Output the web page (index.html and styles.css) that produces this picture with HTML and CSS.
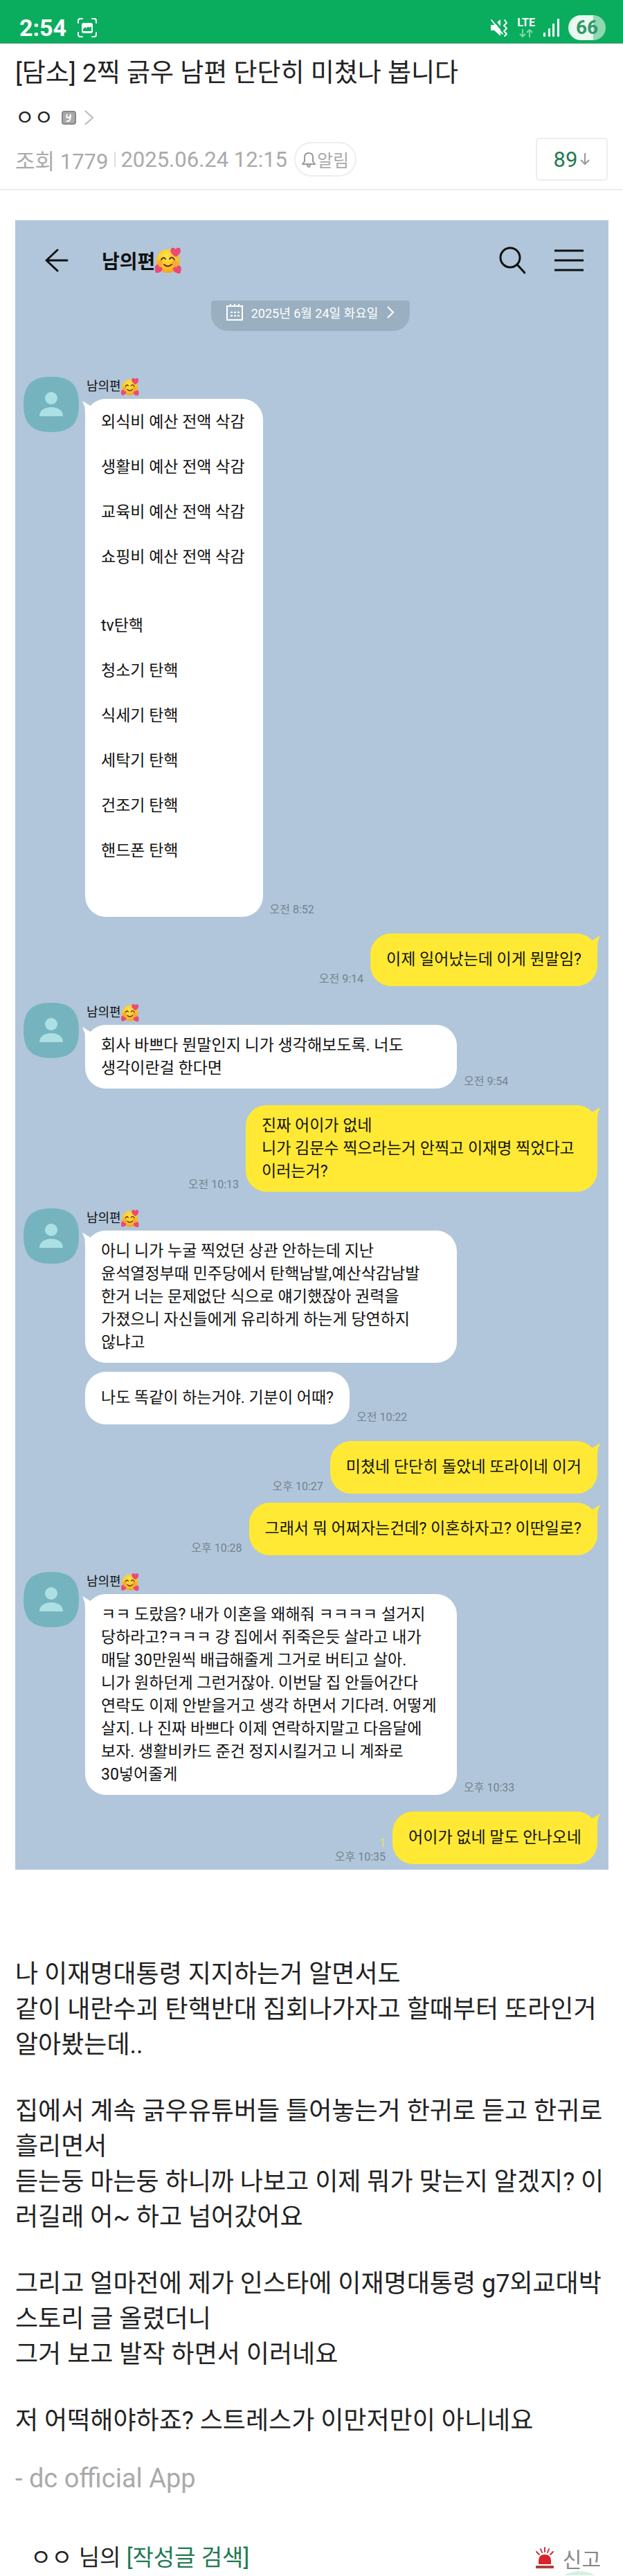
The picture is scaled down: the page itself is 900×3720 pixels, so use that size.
FILE: index.html
```html
<!DOCTYPE html>
<html lang="ko">
<head>
    <meta charset="UTF-8">
    <meta name="viewport" content="width=device-width, initial-scale=1.0">
    <title>[담소] 2찍 긁우 남편 단단히 미쳤나 봅니다</title>
    <link rel="stylesheet" href="styles.css">
</head>
<body>

<!-- shared icons -->
<svg class="defs" width="0" height="0" aria-hidden="true">
    <defs>
        <radialGradient id="face" cx="0.45" cy="0.3" r="0.75">
            <stop offset="0" stop-color="#ffe34a"/>
            <stop offset="0.65" stop-color="#fcc028"/>
            <stop offset="1" stop-color="#f09a22"/>
        </radialGradient>
    </defs>
    <symbol id="love" viewBox="0 0 38 40">
        <circle cx="18.5" cy="21" r="17" fill="url(#face)"/>
        <circle cx="7" cy="24" r="4" fill="#f79a3e" opacity="0.7"/>
        <circle cx="28" cy="24" r="4" fill="#f79a3e" opacity="0.7"/>
        <path d="M9 19q3-5 6-1M21 18q3-5 7 1" fill="none" stroke="#5a3512" stroke-width="2" stroke-linecap="round"/>
        <path d="M13 26q5 5 11 0" fill="none" stroke="#5a3512" stroke-width="2" stroke-linecap="round"/>
        <path d="M30 15C24 12 21 7 23 3.5c2-3 5.5-2 6.5.5 2-3 7-3 7.5 1 .5 4-3 8-7 10z" fill="#ec4a72"/>
        <path d="M1 38C-1 33-1 28 2 26.5c3-1 4 1 4 3 2.5-1 5 .5 4.5 3.5C10 36.5 5 38.5 1 38z" fill="#ec4a72"/>
        <path d="M36 39c2-4 2.5-9 0-11-2.5-1.5-4.5 0-5 2-2-1.5-5-.5-5 2.5 0 4 5 6.5 10 6.5z" fill="#ec4a72"/>
    </symbol>
    <symbol id="avatar" viewBox="0 0 80 80">
        <path d="M40 0C68 0 80 12 80 40S68 80 40 80 0 68 0 40 12 0 40 0z" fill="#75b4bf"/>
        <circle cx="40" cy="31" r="9" fill="#ade0e2"/>
        <path d="M23 57c0-8 7-13 17-13s17 5 17 13z" fill="#ade0e2"/>
    </symbol>
</svg>

<div class="page">
    <div class="status-bar">
        <span class="clock">2:54</span>
        <svg width="30" height="30" viewBox="0 0 30 30" fill="none" stroke="#fff" stroke-width="2" stroke-linecap="round">
            <path d="M2 8V5q0-3 3-3h3M22 2h3q3 0 3 3v3M28 22v3q0 3-3 3h-3M8 28H5q-3 0-3-3v-3"/>
            <rect x="8" y="9" width="14" height="13" rx="2" fill="#fff"/>
            <path d="M9 20v-3l3-3 2 2 2-3 2 2 3-2v7z" fill="#0aad5e" stroke="none"/>
        </svg>
        <div class="status-right">
            <svg width="28" height="28" viewBox="0 0 28 28" fill="none" stroke="#fff" stroke-width="3" stroke-linecap="round" stroke-linejoin="round">
                <path d="M2 10h5l9-8v24l-9-8H2z" fill="#fff" stroke="none"/>
                <path d="M22 3l3 4-4 4 4 4-4 4 4 4-3 3" stroke-width="2"/>
                <path d="M5 1l14 17" stroke="#0aad5e" stroke-linecap="butt"/>
                <path d="M3 3l16 20" stroke-width="2"/>
            </svg>
            <div class="network">
                <span>LTE</span>
                <svg width="22" height="12" viewBox="0 0 22 12" fill="none" stroke="#7fd8a8" stroke-width="2">
                    <path d="M6 0v11M2 7l4 4 4-4M16 12V1M12 5l4-4 4 4"/>
                </svg>
            </div>
            <svg width="24" height="26" viewBox="0 0 24 26" fill="#fff">
                <rect x="0" y="20" width="3" height="6" rx="1"/>
                <rect x="7" y="14" width="3" height="12" rx="1"/>
                <rect x="13" y="7" width="3" height="19" rx="1"/>
                <rect x="20" y="0" width="3" height="26" rx="1"/>
            </svg>
            <span class="battery">66</span>
        </div>
    </div>

    <header class="post-head">
        <h1>[담소] 2찍 긁우 남편 단단히 미쳤나 봅니다</h1>
        <a class="writer" href="#">
            <span>ㅇㅇ</span>
            <svg width="21" height="20" viewBox="0 0 21 20">
                <rect x="1" y="1" width="19" height="18" rx="3" fill="#aaa" stroke="#888" stroke-width="2"/>
                <path d="M8 5q-2 5 1 5t4-5q0 9-3 10H7" fill="none" stroke="#fff" stroke-width="2"/>
            </svg>
            <svg width="14" height="22" viewBox="0 0 14 22" fill="none" stroke="#bbb" stroke-width="2"><path d="M1 1l11 10L1 21"/></svg>
        </a>
        <div class="meta">
            <span>조회 1779</span>
            <span class="date">2025.06.24 12:15</span>
            <button class="alarm" type="button">
                <svg width="20" height="23" viewBox="0 0 20 23" fill="none" stroke="#999" stroke-width="2"><path d="M1 18h18l-3-4V8q0-6-6-6T4 8v6zM8 18q0 4 2 4t2-4"/></svg>알림
            </button>
            <button class="comments" type="button">89
                <svg width="14" height="18" viewBox="0 0 14 18" fill="none" stroke="#999" stroke-width="2"><path d="M7 0v16M1 10l6 6 6-6"/></svg>
            </button>
        </div>
    </header>

    <section class="chat">
        <div class="chat-head">
            <button type="button" aria-label="뒤로">
                <svg width="34" height="34" viewBox="0 0 34 34" fill="none" stroke="#111" stroke-width="3" stroke-linecap="round" stroke-linejoin="round"><path d="M18 2L2 17l16 15M2 17h30"/></svg>
            </button>
            <h2>남의편<svg width="38" height="40"><use href="#love"/></svg></h2>
            <button type="button" aria-label="검색">
                <svg width="38" height="40" viewBox="0 0 38 40" fill="none" stroke="#111" stroke-width="3" stroke-linecap="round"><circle cx="16" cy="16" r="14"/><path d="M26 26l11 12"/></svg>
            </button>
            <button type="button" aria-label="메뉴">
                <svg width="42" height="34" viewBox="0 0 42 34" fill="none" stroke="#111" stroke-width="3"><path d="M0 3h42M0 17h42M0 31h42"/></svg>
            </button>
        </div>
        <button class="day" type="button">
            <svg width="24" height="26" viewBox="0 0 24 26" fill="none" stroke="#fff" stroke-width="2"><path d="M1 4h22v20H1zM6 1v4M12 1v4M18 1v4M6 13h3M11 13h3M16 13h3M6 18h3M11 18h3M16 18h3"/></svg>
            2025년 6월 24일 화요일
            <svg width="12" height="18" viewBox="0 0 12 18" fill="none" stroke="#fff" stroke-width="2"><path d="M2 1l8 8-8 8"/></svg>
        </button>

        <div class="group">
            <svg class="avatar"><use href="#avatar"/></svg>
            <div class="thread">
                <div class="name">남의편<svg width="26" height="27"><use href="#love"/></svg></div>
                <div class="row">
                    <div class="bubble tail list">
                        <ul>
                            <li>외식비 예산 전액 삭감</li>
                            <li>생활비 예산 전액 삭감</li>
                            <li>교육비 예산 전액 삭감</li>
                            <li>쇼핑비 예산 전액 삭감</li>
                        </ul>
                        <ul>
                            <li>tv탄핵</li>
                            <li>청소기 탄핵</li>
                            <li>식세기 탄핵</li>
                            <li>세탁기 탄핵</li>
                            <li>건조기 탄핵</li>
                            <li>핸드폰 탄핵</li>
                        </ul>
                    </div>
                    <time>오전 8:52</time>
                </div>
            </div>
        </div>

        <div class="row mine">
            <time>오전 9:14</time>
            <div class="bubble tail single">이제 일어났는데 이게 뭔말임?</div>
        </div>

        <div class="group">
            <svg class="avatar"><use href="#avatar"/></svg>
            <div class="thread">
                <div class="name">남의편<svg width="26" height="27"><use href="#love"/></svg></div>
                <div class="row">
                    <div class="bubble tail wide">회사 바쁘다 뭔말인지 니가 생각해보도록. 너도<br>생각이란걸 한다면</div>
                    <time>오전 9:54</time>
                </div>
            </div>
        </div>

        <div class="row mine">
            <time>오전 10:13</time>
            <div class="bubble tail wide">진짜 어이가 없네<br>니가 김문수 찍으라는거 안찍고 이재명 찍었다고<br>이러는거?</div>
        </div>

        <div class="group">
            <svg class="avatar"><use href="#avatar"/></svg>
            <div class="thread">
                <div class="name">남의편<svg width="26" height="27"><use href="#love"/></svg></div>
                <div class="row">
                    <div class="bubble tail wide">아니 니가 누굴 찍었던 상관 안하는데 지난<br>윤석열정부때 민주당에서 탄핵남발,예산삭감남발<br>한거 너는 문제없단 식으로 얘기했잖아 권력을<br>가졌으니 자신들에게 유리하게 하는게 당연하지<br>않냐고</div>
                </div>
                <div class="row next">
                    <div class="bubble single">나도 똑같이 하는거야. 기분이 어때?</div>
                    <time>오전 10:22</time>
                </div>
            </div>
        </div>

        <div class="row mine">
            <time>오후 10:27</time>
            <div class="bubble tail single">미쳤네 단단히 돌았네 또라이네 이거</div>
        </div>
        <div class="row mine next">
            <time>오후 10:28</time>
            <div class="bubble tail single">그래서 뭐 어쩌자는건데? 이혼하자고? 이딴일로?</div>
        </div>

        <div class="group">
            <svg class="avatar"><use href="#avatar"/></svg>
            <div class="thread">
                <div class="name">남의편<svg width="26" height="27"><use href="#love"/></svg></div>
                <div class="row">
                    <div class="bubble tail wide">ㅋㅋ 도랐음? 내가 이혼을 왜해줘 ㅋㅋㅋㅋ 설거지<br>당하라고?ㅋㅋㅋ 걍 집에서 쥐죽은듯 살라고 내가<br>매달 30만원씩 배급해줄게 그거로 버티고 살아.<br>니가 원하던게 그런거잖아. 이번달 집 안들어간다<br>연락도 이제 안받을거고 생각 하면서 기다려. 어떻게<br>살지. 나 진짜 바쁘다 이제 연락하지말고 다음달에<br>보자. 생활비카드 준건 정지시킬거고 니 계좌로<br>30넣어줄게</div>
                    <time>오후 10:33</time>
                </div>
            </div>
        </div>

        <div class="row mine">
            <time><b>1</b>오후 10:35</time>
            <div class="bubble tail single">어이가 없네 말도 안나오네</div>
        </div>
    </section>

    <article class="post-body">
        <p>나 이재명대통령 지지하는거 알면서도<br>같이 내란수괴 탄핵반대 집회나가자고 할때부터 또라인거 알아봤는데..</p>
        <p>집에서 계속 긁우유튜버들 틀어놓는거 한귀로 듣고 한귀로 흘리면서<br>듣는둥 마는둥 하니까 나보고 이제 뭐가 맞는지 알겠지? 이<br>러길래 어~ 하고 넘어갔어요</p>
        <p>그리고 얼마전에 제가 인스타에 이재명대통령 g7외교대박 스토리 글 올렸더니<br>그거 보고 발작 하면서 이러네요</p>
        <p>저 어떡해야하죠? 스트레스가 이만저만이 아니네요</p>
        <p class="sign">- dc official App</p>
    </article>

    <footer class="post-foot">
        <div class="author">
            <span>ㅇㅇ</span>
            <span>님의 <a href="#">[작성글 검색]</a></span>
        </div>
        <button class="report" type="button">
            <svg width="28" height="32" viewBox="0 0 28 32" fill="none" stroke="#c8323a" stroke-width="2" stroke-linecap="round">
                <path d="M14 1v6M8 3l2 5M20 3l-2 5M2 7l4 4M26 7l-4 4"/>
                <path d="M5 25v-5q0-9 9-9t9 9v5z" fill="#d8232a" stroke="none"/>
                <rect x="1" y="27" width="26" height="4" rx="1" fill="#a8403c" stroke="none"/>
            </svg>신고
        </button>
    </footer>
    <button class="to-top" type="button" aria-label="맨 위로"></button>
</div>

</body>
</html>
```
FILE: styles.css
```css
:root {
    --green: #0aad5e;
    --link: #1f7a52;
    --text: #222;
    --muted: #aaa;
    --line: #eee;
    --chat-bg: #b1c6da;
    --mine: #ffe934;
}

* {
    box-sizing: border-box;
}

body {
    margin: 0;
    background: #fff;
    color: var(--text);
    font-family: Roboto, "Noto Sans CJK KR", sans-serif;
}

h1, h2, p, ul {
    margin: 0;
    padding: 0;
    font-weight: 400;
}

button {
    padding: 0;
    border: none;
    background: none;
    color: inherit;
    font-family: inherit;
}

a {
    color: inherit;
    text-decoration: none;
}

svg {
    display: block;
    flex-shrink: 0;
}

.defs {
    position: absolute;
}

.page {
    position: relative;
    overflow: hidden;
    padding-bottom: 1px;
}

/* status bar */
.status-bar {
    display: flex;
    align-items: center;
    gap: 15px;
    height: 63px;
    padding: 18px 25px 0 28px;
    background: var(--green);
    border-bottom: 1px solid #4b9a74;
    color: #fff;
}

.clock {
    font-size: 34px;
    font-weight: 700;
}

.status-right {
    display: flex;
    align-items: center;
    gap: 12px;
    margin-left: auto;
}

.network {
    display: flex;
    flex-direction: column;
    align-items: center;
    gap: 2px;
    font-size: 16px;
    font-weight: 700;
    line-height: 14px;
}

.battery {
    width: 54px;
    border-radius: 18px;
    background: linear-gradient(90deg, #e9f8f0 66%, #8fd8b0 66%);
    color: #2f9a66;
    font-size: 28px;
    font-weight: 700;
    line-height: 36px;
    text-align: center;
}

/* post header */
.post-head {
    padding: 16px 22px 12px;
    border-bottom: 2px solid var(--line);
}

.post-head h1 {
    font-size: 37px;
    line-height: 54px;
}

.writer {
    display: flex;
    align-items: center;
    gap: 12px;
    margin-top: 17px;
    font-size: 30px;
    line-height: 40px;
}

.meta {
    display: flex;
    align-items: center;
    height: 62px;
    margin-top: 9px;
    color: var(--muted);
    font-size: 31px;
}

.date {
    margin-left: 9px;
    padding-left: 9px;
    background: linear-gradient(#ddd, #ddd) left center / 2px 22px no-repeat;
}

.alarm {
    display: flex;
    align-items: center;
    gap: 2px;
    height: 50px;
    margin-left: 10px;
    padding: 0 9px;
    border: 2px solid var(--line);
    border-radius: 25px;
    font-size: 25px;
}

.comments {
    display: flex;
    align-items: center;
    justify-content: center;
    gap: 4px;
    width: 104px;
    height: 62px;
    margin-left: auto;
    border: 2px solid var(--line);
    border-radius: 5px;
    color: var(--link);
    font-size: 31px;
}

/* chat */
.chat {
    display: flex;
    flex-direction: column;
    margin: 43px 21px 0 22px;
    padding: 0 16px 8px 12px;
    background: var(--chat-bg);
    color: #111;
}

.chat-head {
    display: flex;
    align-items: center;
    gap: 42px;
    height: 116px;
    padding: 0 20px 0 31px;
}

.chat-head h2 {
    display: flex;
    flex: 1;
    align-items: center;
    margin-left: 6px;
    font-size: 28px;
    font-weight: 700;
}

.day {
    display: flex;
    align-items: center;
    align-self: center;
    gap: 12px;
    height: 44px;
    padding: 0 22px 10px;
    border-radius: 4px 4px 24px 24px;
    background: #9ab0c0;
    color: #fff;
    font-size: 18px;
}

.group {
    display: flex;
    gap: 9px;
    margin-top: 24px;
}

.day + .group {
    margin-top: 66px;
}

.avatar {
    width: 80px;
    height: 80px;
}

.name {
    display: flex;
    align-items: center;
    height: 32px;
    padding: 0 0 4px 2px;
    font-size: 18px;
    line-height: 28px;
}

.row {
    display: flex;
    align-items: flex-end;
    gap: 10px;
}

.mine {
    justify-content: flex-end;
    margin-top: 24px;
}

.next {
    margin-top: 13px;
}

.bubble {
    position: relative;
    padding: 13px 23px;
    border-radius: 30px;
    background: #fff;
    font-size: 23px;
    line-height: 33px;
    white-space: nowrap;
}

.single {
    line-height: 50px;
}

.mine .bubble {
    background: var(--mine);
}

.wide {
    width: 537px;
}

.mine .wide {
    width: 508px;
}

/* speech tail in the upper corner */
.tail::before {
    content: "";
    position: absolute;
    top: 3px;
    left: -4px;
    width: 20px;
    height: 24px;
    background: inherit;
    clip-path: polygon(0 0, 60% 30%, 100% 60%, 20% 100%, 18% 40%);
}

.mine .tail::before {
    left: auto;
    right: -4px;
    clip-path: polygon(100% 0, 40% 30%, 0 60%, 80% 100%, 82% 40%);
}

.list {
    padding: 17px 26px 79px 23px;
}

.list ul {
    display: grid;
    gap: 32px;
    list-style: none;
}

.list ul + ul {
    margin-top: 66px;
}

time {
    display: flex;
    flex-direction: column;
    align-items: flex-end;
    color: #74828f;
    font-size: 16px;
    line-height: 20px;
    white-space: nowrap;
}

time b {
    color: #e6e45c;
    font-weight: 400;
}

/* article */
.post-body {
    padding: 126px 22px 0;
    font-size: 36px;
    line-height: 51px;
}

.post-body p + p {
    margin-top: 45px;
}

.post-body .sign {
    color: var(--muted);
    font-size: 38px;
}

.post-body p + .sign {
    margin-top: 32px;
}

.post-foot {
    display: flex;
    align-items: center;
    justify-content: space-between;
    padding: 65px 32px 0 44px;
    font-size: 33px;
    line-height: 48px;
}

.author {
    display: flex;
    gap: 9px;
}

.post-foot a {
    color: var(--link);
}

.report {
    display: flex;
    align-items: center;
    gap: 12px;
    color: #888;
    font-size: 30px;
}

.to-top {
    position: absolute;
    right: 20px;
    bottom: -80px;
    width: 86px;
    height: 86px;
    border-radius: 50%;
    background: #d6f0e2;
}
```
